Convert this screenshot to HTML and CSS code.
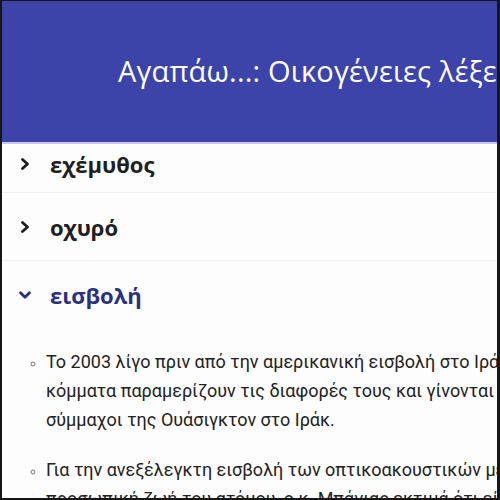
FILE: index.html
```html
<!DOCTYPE html>
<html lang="el">
<head>
<meta charset="utf-8">
<link rel="stylesheet" href="styles.css">
</head>
<body>
<div class="frame">
  <header class="header">
    <h1 class="title">Αγαπάω...: Οικογένειες λέξεων</h1>
  </header>
  <main class="list">
    <div class="row row--partial">
      <svg class="chev" viewBox="0 0 10 10"><path d="M3.2 1.8 L6.8 5 L3.2 8.2" /></svg>
      <span class="word">εχέμυθος</span>
    </div>
    <div class="row">
      <svg class="chev" viewBox="0 0 10 10"><path d="M3.2 1.8 L6.8 5 L3.2 8.2" /></svg>
      <span class="word">οχυρό</span>
    </div>
    <div class="row row--open">
      <svg class="chev chev--open" viewBox="0 0 10 10"><path d="M1.8 3.4 L5 6.6 L8.2 3.4" /></svg>
      <span class="word">εισβολή</span>
    </div>
    <ul class="examples">
      <li>Το 2003 λίγο πριν από την αμερικανική εισβολή στο Ιράκ, τα κουρδικά<br>κόμματα παραμερίζουν τις διαφορές τους και γίνονται<br>σύμμαχοι της Ουάσιγκτον στο Ιράκ.</li>
      <li>Για την ανεξέλεγκτη εισβολή των οπτικοακουστικών μέσων στην<br>προσωπική ζωή του ατόμου, ο κ. Μπάγιας εκτιμά ότι είναι</li>
    </ul>
  </main>
</div>
</body>
</html>
```
FILE: styles.css
```css
html, body {
  margin: 0;
  padding: 0;
  background: #ffffff;
}
.frame {
  box-sizing: border-box;
  width: 500px;
  height: 500px;
  overflow: hidden;
  border-style: solid;
  border-color: #161616;
  border-width: 1px 3px 2px 2px;
  background: #fdfdfd;
  font-family: "Open Sans", "DejaVu Sans", sans-serif;
}
.header {
  height: 141px;
  background: #3c44a9;
  display: flex;
  align-items: center;
  padding-left: 116px;
  border-bottom: 2px solid #c9c6f2;
  white-space: nowrap;
  overflow: hidden;
}
.title {
  margin: 0;
  padding-bottom: 3px;
  color: #ffffff;
  font-weight: 400;
  font-size: 29px;
  letter-spacing: 0.2px;
}
.list {
  display: flex;
  flex-direction: column;
}
.row {
  height: 68px;
  display: flex;
  align-items: center;
  padding-left: 16px;
  border-bottom: 1px solid #f2f2f2;
  box-sizing: border-box;
}
.row--partial {
  height: 49px;
  padding-bottom: 9px;
}
.row--open {
  border-bottom: none;
}
.chev {
  width: 14px;
  height: 14px;
  fill: none;
  stroke: #1e1e1e;
  stroke-width: 2;
  stroke-linecap: round;
  stroke-linejoin: round;
}
.chev--open {
  stroke: #2b3080;
}
.word {
  margin-left: 18px;
  font-size: 22px;
  font-weight: 700;
  color: #1f1f1f;
}
.row--open .word {
  color: #2b3080;
}
.examples {
  margin: 18px 0 0 0;
  padding-left: 44px;
  list-style: circle;
  font-family: Roboto, "Open Sans", sans-serif;
  font-size: 18px;
  line-height: 29px;
  color: #222222;
  white-space: nowrap;
}
.examples li {
  margin-bottom: 21px;
}
.examples li::marker {
  color: #777;
  font-size: 14px;
}
```
